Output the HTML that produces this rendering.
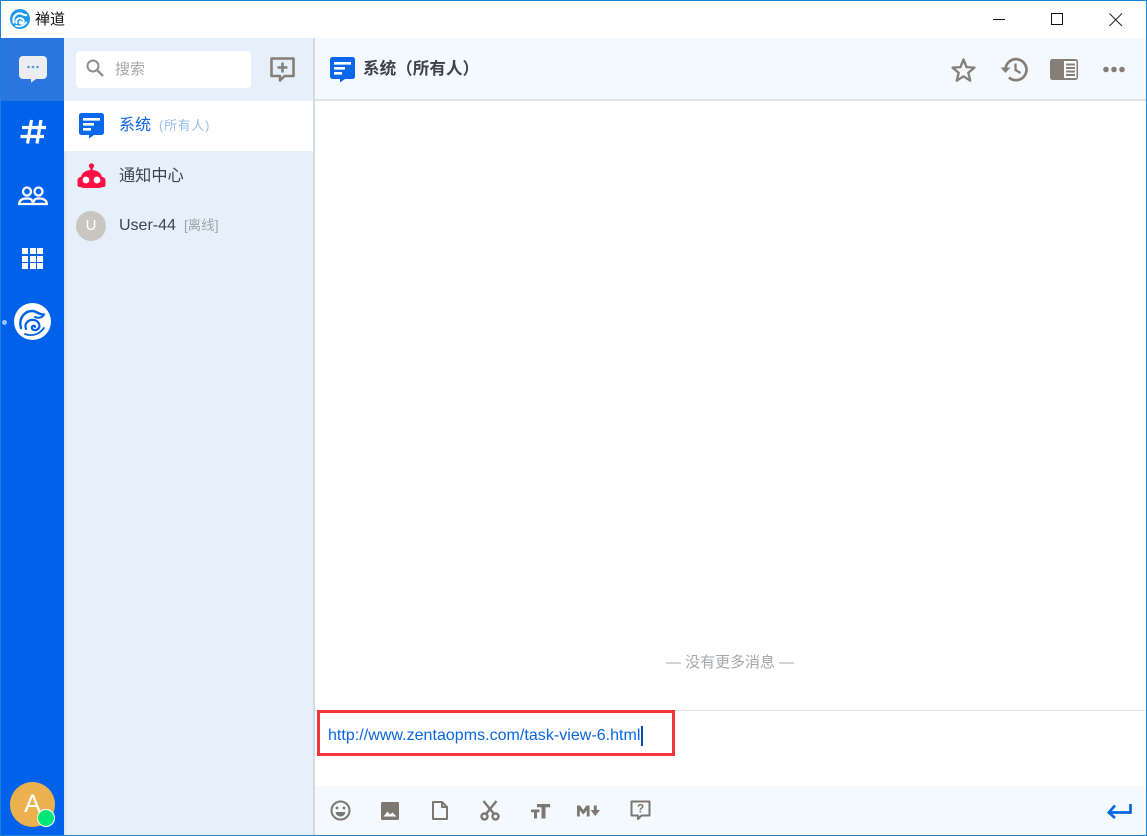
<!DOCTYPE html>
<html><head><meta charset="utf-8"><style>
*{box-sizing:border-box}
html,body{margin:0;padding:0;width:1147px;height:836px;overflow:hidden;background:#fff;font-family:"Liberation Sans","Noto Sans CJK SC",sans-serif}
.a{position:absolute}
svg{position:absolute;overflow:visible}
.t{position:absolute;white-space:nowrap;line-height:20px}
</style></head><body>
<div class="a" style="left:0;top:0;width:1147px;height:836px;border:1px solid #1883d7;border-bottom-width:2px"></div>

<!-- title bar -->
<svg style="left:10px;top:9px" width="20" height="20" viewBox="0 0 37 37"><circle cx="18.500" cy="18.500" r="18.500" fill="#1b9af0"/><g fill="none" stroke="#fff" stroke-linecap="round"><path d="M7 25C4 15 11 8 18 8c5 0 7 4 12 3.500" stroke-width="4"/><path d="M12 26c-2-5 2-10 8-9 5 1 7 6 4 9-3 2.500-7 .5-6-2 .6-1.500 3-1.500 3 0" stroke-width="3.500"/><path d="M11 31c6 2.500 14 1 19-6" stroke-width="3"/></g></svg>
<div class="t" style="left:35px;top:10px;font-size:15px;color:#111">禅道</div>
<div class="a" style="left:993px;top:19px;width:12px;height:1px;background:#111"></div>
<div class="a" style="left:1051px;top:13px;width:12px;height:12px;border:1px solid #111"></div>
<svg style="left:1109px;top:13px" width="14" height="14"><path d="M.5 .5L13 13M13 .5L.5 13" stroke="#222" stroke-width="1" fill="none"/></svg>

<!-- left nav -->
<div class="a" style="left:1px;top:38px;width:63px;height:797px;background:#0062ea"></div>
<div class="a" style="left:1px;top:38px;width:63px;height:63px;background:#2a76df"></div>
<svg style="left:19px;top:56px" width="28" height="27"><path d="M4 0h20a4 4 0 0 1 4 4v15a4 4 0 0 1-4 4h-7l-5 3.800V23H4a4 4 0 0 1-4-4V4a4 4 0 0 1 4-4z" fill="#ebedf0"/><circle cx="9.500" cy="11" r="1.300" fill="#5f96e2"/><circle cx="14" cy="11" r="1.300" fill="#5f96e2"/><circle cx="18.500" cy="11" r="1.300" fill="#5f96e2"/></svg>
<svg style="left:20px;top:119px" width="27" height="27"><path d="M11.500 1L7.500 24.500M21 1L17 24.500M2 8.500H26M0.500 17.500H24" stroke="#fff" stroke-width="3.200" fill="none"/></svg>
<svg style="left:18px;top:186px" width="30" height="20" fill="none" stroke="#fff" stroke-width="2.300"><circle cx="9" cy="5.500" r="4"/><circle cx="20.500" cy="5.500" r="4"/><path d="M1.200 18c0-3.500 3-5.500 7-5.500h2c3 0 4.800 2.500 4.800 5.500zM15 18c0-3 1.800-5.500 4.800-5.500h2c4 0 7 2 7 5.500z"/></svg>
<div class="a" style="left:22px;top:248px;width:21px;height:21px;background:
linear-gradient(#fff,#fff) 0 0/6px 6px no-repeat,linear-gradient(#fff,#fff) 7.500px 0/6px 6px no-repeat,linear-gradient(#fff,#fff) 15px 0/6px 6px no-repeat,
linear-gradient(#fff,#fff) 0 7.500px/6px 6px no-repeat,linear-gradient(#fff,#fff) 7.500px 7.500px/6px 6px no-repeat,linear-gradient(#fff,#fff) 15px 7.500px/6px 6px no-repeat,
linear-gradient(#fff,#fff) 0 15px/6px 6px no-repeat,linear-gradient(#fff,#fff) 7.500px 15px/6px 6px no-repeat,linear-gradient(#fff,#fff) 15px 15px/6px 6px no-repeat"></div>
<div class="a" style="left:2px;top:320px;width:5px;height:5px;border-radius:50%;background:#9cc3f5"></div>
<svg style="left:14px;top:303px" width="37" height="37" viewBox="0 0 37 37"><circle cx="18.500" cy="18.500" r="18.500" fill="#fff"/><g fill="none" stroke="#0062ea" stroke-linecap="round"><path d="M7 25C4 15 11 8 18 8c5 0 7 4 12 3.500" stroke-width="2.400"/><path d="M12 26c-2-5 2-10 8-9 5 1 7 6 4 9-3 2.500-7 .5-6-2 .6-1.500 3-1.500 3 0" stroke-width="2.200"/><path d="M11 31c6 2.500 14 1 19-6" stroke-width="1.800"/><path d="M21 14c3 1.500 7 1 9-2.500" stroke-width="2"/></g></svg>
<div class="a" style="left:10px;top:782px;width:45px;height:45px;border-radius:50%;background:#eab14d"></div>
<div class="t" style="left:10px;top:792px;width:45px;text-align:center;font-size:25px;line-height:25px;color:#fff">A</div>
<div class="a" style="left:37px;top:809px;width:18px;height:18px;border-radius:50%;background:#00e676;border:1.500px solid #fff"></div>

<!-- list panel -->
<div class="a" style="left:64px;top:38px;width:250px;height:797px;background:#e5f0fa"></div>
<div class="a" style="left:64px;top:101px;width:4px;height:734px;background:linear-gradient(90deg,#d8e3ee,#e5f0fa)"></div>
<div class="a" style="left:313px;top:38px;width:2px;height:797px;background:#d3dce5"></div>
<div class="a" style="left:76px;top:51px;width:175px;height:37px;border-radius:4px;background:#fff"></div>
<svg style="left:86px;top:59px" width="18" height="19" fill="none" stroke="#8e8e8e" stroke-width="2"><circle cx="7" cy="7" r="5.500"/><path d="M11 11l6 6" stroke-width="2.400"/></svg>
<div class="t" style="left:115px;top:60px;font-size:15px;color:#a6a6a6">搜索</div>
<svg style="left:270px;top:57px" width="26" height="26"><path d="M1.500 1.500h22v17.500h-9l-4.500 4.500v-4.500h-8.500z" fill="none" stroke="#857f78" stroke-width="2.600" stroke-linejoin="round"/><path d="M12.500 5.500v10M7.500 10.500h10" stroke="#857f78" stroke-width="2.600"/></svg>

<div class="a" style="left:64px;top:101px;width:249px;height:50px;background:#fff"></div>
<svg style="left:79px;top:113px" width="26" height="26"><path d="M2.500 0h20A2.500 2.500 0 0 1 25 2.500v17a2.500 2.500 0 0 1-2.500 2.500H15l-5 3.500V22H2.500A2.500 2.500 0 0 1 0 19.500v-17A2.500 2.500 0 0 1 2.500 0z" fill="#0a66ea"/><path d="M4 5h17v2.600H4zM4 10h11v2.600H4zM4 15h8v2.600H4z" fill="#fff"/></svg>
<div class="t" style="left:119px;top:116px;font-size:16px;color:#0a63e6">系统</div>
<div class="t" style="left:159px;top:116px;font-size:13px;color:#96bdf2;letter-spacing:.7px">(所有人)</div>

<svg style="left:77px;top:163px" width="29" height="26"><circle cx="14.500" cy="2.800" r="2.600" fill="#ff0f45"/><rect x="13.300" y="3" width="2.400" height="6" fill="#ff0f45"/><path d="M4 14C5 9.500 9 7 14.500 7S24 9.500 25 14c1 0 1.500 .2 2.500 1 .8 .6 1 1.500 1 2.500V22c0 1.200-.8 2-2 2H25c-.8 .6-1.800 1-3 1H7c-1.200 0-2.200-.4-3-1H2.500c-1.200 0-2-.8-2-2v-4.500c0-1 .2-1.900 1-2.500 1-.8 1.500-1 2.500-1z" fill="#ff0f45"/><circle cx="9" cy="17" r="3.400" fill="#fff"/><circle cx="20" cy="17" r="3.400" fill="#fff"/></svg>
<div class="t" style="left:119px;top:166px;font-size:16.200px;color:#3c4352">通知中心</div>

<div class="a" style="left:76px;top:211px;width:30px;height:30px;border-radius:50%;background:#c9c6c0"></div>
<div class="t" style="left:76px;top:216px;width:30px;text-align:center;font-size:15px;color:#fff">U</div>
<div class="t" style="left:119px;top:216px;font-size:16px;color:#3c4352">User-44</div>
<div class="t" style="left:184px;top:216px;font-size:13.500px;color:#a0a4aa">[离线]</div>

<!-- header -->
<div class="a" style="left:315px;top:38px;width:831px;height:62px;background:#f3f9fd"></div>
<div class="a" style="left:315px;top:99px;width:831px;height:2px;background:#dfe3e6"></div>
<svg style="left:330px;top:57px" width="26" height="26"><path d="M2.500 0h20A2.500 2.500 0 0 1 25 2.500v17a2.500 2.500 0 0 1-2.500 2.500H15l-5 3.500V22H2.500A2.500 2.500 0 0 1 0 19.500v-17A2.500 2.500 0 0 1 2.500 0z" fill="#0a66ea"/><path d="M4 5h17v2.600H4zM4 10h11v2.600H4zM4 15h8v2.600H4z" fill="#fff"/></svg>
<div class="t" style="left:363px;top:59px;font-size:16.600px;font-weight:bold;color:#3e4248">系统（所有人）</div>
<svg style="left:951px;top:57px" width="25" height="25"><path d="M12.500 2.500l3 7.600 8 .5-6.200 5.200 2 7.900-6.800-4.400-6.800 4.400 2-7.900L1.500 10.600l8-.5z" fill="none" stroke="#857f78" stroke-width="2.300" stroke-linejoin="round"/></svg>
<svg style="left:1000px;top:57px" width="28" height="25" fill="none" stroke="#857f78" stroke-width="2.700"><path d="M5.500 12.500a10.500 10.500 0 1 1 3.500 8"/><path d="M0.500 10.500h10L5.500 16z" fill="#857f78" stroke="none"/><path d="M15.500 6.500v6.500l5 3" stroke-width="2.300"/></svg>
<svg style="left:1050px;top:59px" width="28" height="21"><rect width="28" height="21" rx="2.500" fill="#857f78"/><rect x="14" y="2" width="12.500" height="17" fill="#fff"/><path d="M16 5.500h9M16 9h9M16 12.500h9M16 16h9" stroke="#857f78" stroke-width="2"/></svg>
<svg style="left:1103px;top:66px" width="22" height="7" fill="#857f78"><circle cx="3" cy="3.500" r="2.800"/><circle cx="11" cy="3.500" r="2.800"/><circle cx="19" cy="3.500" r="2.800"/></svg>

<div class="t" style="left:666px;top:653px;font-size:15px;line-height:20px;color:#a4a7ab;letter-spacing:-.02px">— 没有更多消息 —</div>

<!-- input -->
<div class="a" style="left:315px;top:710px;width:831px;height:1px;background:#dfe3e6"></div>
<div class="a" style="left:317px;top:710px;width:358px;height:46px;border:3px solid #f53539"></div>
<div class="t" style="left:328px;top:726px;font-size:16px;color:#0a66e0;letter-spacing:.03px">http://www.zentaopms.com/task-view-6.html</div>
<div class="a" style="left:641px;top:726px;width:1.500px;height:20px;background:#0b4ea8"></div>

<!-- toolbar -->
<div class="a" style="left:315px;top:786px;width:831px;height:49px;background:#f3f9fd"></div>
<svg style="left:330px;top:800px" width="21" height="21" fill="none" stroke="#7c7770" stroke-width="2"><circle cx="10.500" cy="10.500" r="9"/><circle cx="7" cy="8" r="1.400" fill="#7c7770" stroke="none"/><circle cx="14" cy="8" r="1.400" fill="#7c7770" stroke="none"/><path d="M5.500 12h10c-.5 3-2.500 4.500-5 4.500s-4.500-1.500-5-4.500z" fill="#7c7770" stroke="none"/></svg>
<svg style="left:381px;top:802px" width="18" height="18"><rect width="18" height="18" rx="1.500" fill="#7c7770"/><path d="M2.500 14.500l4-5 2.500 3 2.500-2 4 4z" fill="#fff"/></svg>
<svg style="left:432px;top:801px" width="16" height="19" fill="none" stroke="#7c7770" stroke-width="2"><path d="M1 1h9l5 5v12H1zM10 1v5h5" stroke-linejoin="round"/></svg>
<svg style="left:480px;top:800px" width="20" height="21" fill="none" stroke="#7c7770" stroke-width="2.400"><circle cx="4.500" cy="16.500" r="3"/><circle cx="15.500" cy="16.500" r="3"/><path d="M6 14L16.500 1M14 14L3.500 1"/></svg>
<svg style="left:531px;top:803px" width="19" height="16" fill="#7c7770"><path d="M6 1h13v3.200h-4.500V15.500h-4V4.200H6zM0 6.500h8.500v2.700H6V15.500H3V9.200H0z"/></svg>
<svg style="left:577px;top:805px" width="25" height="12" fill="#7c7770"><path d="M0 .5h3L6.300 5 9.600 .5h3v11H9.800V5.500L6.300 9.500 2.800 5.500v6H0z"/><path d="M16.800 .5h3v4.500h3.200L18.300 11l-4.800-6h3.300z"/></svg>
<svg style="left:630px;top:800px" width="22" height="22"><path d="M1.500 1.500h18v14h-8l-3.500 3.500v-3.500H1.500z" fill="none" stroke="#7c7770" stroke-width="2" stroke-linejoin="round"/><text x="10.500" y="12.500" font-family="Liberation Sans" font-size="12" font-weight="bold" fill="#7c7770" text-anchor="middle">?</text></svg>
<svg style="left:1107px;top:803px" width="25" height="16" fill="none" stroke="#0a66e0" stroke-width="2.700"><path d="M23.500 1v8.500H2"/><path d="M8 2.500L1.800 9.500 8 15"/></svg>
</body></html>
